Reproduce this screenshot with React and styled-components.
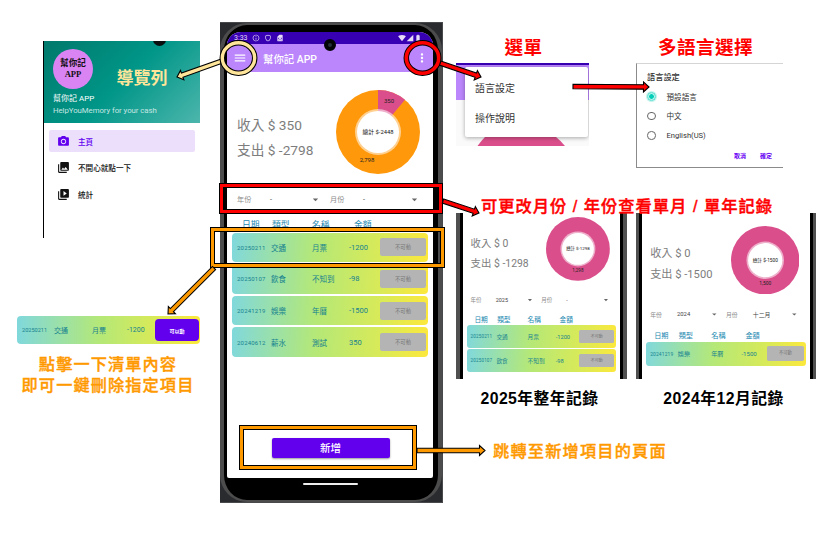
import React from "react";
import styled, { createGlobalStyle, ThemeProvider, css } from "styled-components";
import {
  MdCameraAlt,
  MdPhotoLibrary,
  MdVideoLibrary,
  MdMenu,
  MdMoreVert,
  MdArrowDropDown,
  MdInfoOutline,
  MdOutlineShield,
  MdSimCard,
  MdSignalWifi4Bar,
  MdSignalCellular4Bar,
  MdBatteryFull,
} from "react-icons/md";

const Global = createGlobalStyle`
  * { box-sizing: border-box; }
  body { margin: 0; background: #fff; }
`;

/* Lengths inside a ledger screen follow the theme's scale factor. */
const u = (n) => (p) => `${n * p.theme.k}px`;
const appFont = `Roboto, "Noto Sans CJK TC", sans-serif`;
const noteFont = `"Liberation Sans", "Noto Sans CJK TC", sans-serif`;

const Page = styled.main`
  position: relative;
  display: flex;
  width: 840px;
  height: 540px;
  overflow: hidden;
  font-family: ${appFont};
  white-space: nowrap;
`;

/* ---------- left column ---------- */
const LeftColumn = styled.section`
  width: 220px;
  flex: none;
  padding-top: 41px;
`;
const Drawer = styled.nav`
  width: 157px;
  height: 197px;
  margin-left: 43px;
  border-left: 1px solid #000;
`;
const DrawerHeader = styled.header`
  position: relative;
  height: 82px;
  padding: 7px 0 0 9px;
  overflow: hidden;
  background: linear-gradient(135deg, #00796b 0%, #009688 50%, #4db6ac 100%);
  color: #fff;
`;
const DrawerTop = styled.div`
  display: flex;
  align-items: center;
  height: 41px;
`;
const Avatar = styled.div`
  display: flex;
  flex-direction: column;
  align-items: center;
  justify-content: center;
  width: 40px;
  height: 40px;
  border-radius: 50%;
  background: #da83f3;
  color: #111;
  font: bold 8.6px/10.5px "Liberation Serif", "Noto Sans CJK TC", serif;
`;
const DrawerNote = styled.h2`
  margin: 20px 0 0 23.5px;
  font: bold 17px/20px ${noteFont};
  color: #ffe599;
`;
const DrawerTitle = styled.div`
  margin-top: 4px;
  font-size: 8px;
  line-height: 12px;
`;
const DrawerSubtitle = styled.div`
  font-size: 7.8px;
  line-height: 11px;
  letter-spacing: -0.05px;
  color: #c5e6e2;
`;
const DrawerCamera = styled.i`
  position: absolute;
  left: 109px;
  top: -8px;
  width: 13px;
  height: 13px;
  border-radius: 50%;
  background: #0a0f10;
`;
const NavList = styled.div`
  display: flex;
  flex-direction: column;
  gap: 4.7px;
  padding: 7px 5px 0;
`;
const NavItem = styled.a`
  display: flex;
  align-items: center;
  gap: 8px;
  height: 22px;
  padding-left: 8px;
  border-radius: 2px;
  font-size: 7.6px;
  font-weight: 500;
  color: ${(p) => (p.$active ? "#6200ee" : "#111")};
  background: ${(p) => (p.$active ? "#ecdffc" : "transparent")};
  svg { width: 13px; height: 13px; }
`;
const SwipedRow = styled.div`
  display: grid;
  grid-template-columns: 32px 38px 35px 28px 44px;
  align-items: center;
  width: 183px;
  height: 28px;
  margin: 78px 0 0 17px;
  padding-left: 5px;
  border-radius: 4px;
  background: linear-gradient(90deg, #80d8dc, #b4e878 45%, #d8ea58 75%, #fce83c);
  color: #16828f;
  font-size: 7px;
`;
const SwipedDate = styled.span`
  font-size: 5.6px;
`;
const DeleteButton = styled.button`
  height: 22px;
  padding: 0;
  border: 0;
  border-radius: 4px;
  background: #6200ee;
  color: #fff;
  font: 600 5px ${appFont};
`;
const LeftNote = styled.p`
  width: 216px;
  margin: 10px 0 0;
  font: 500 16.2px/21px ${noteFont};
  letter-spacing: 1.1px;
  text-align: center;
  color: #ff9900;
  -webkit-text-stroke: 0.35px #ff9900;
`;

/* ---------- phone ---------- */
const PhoneFrame = styled.section`
  flex: none;
  width: 223px;
  height: 481px;
  margin-top: 22px;
  border: 1px solid #47494c;
  border-width: 1px 1px 1px 0;
  background: #292b2f;
`;
const PhoneBody = styled.div`
  position: relative;
  height: 479px;
  padding: 7px 5px 0 3px;
  border: solid #4c4c4c;
  border-width: 2px 4px;
  border-radius: 27px;
  background: #000;
`;
const PhoneScreen = styled.div`
  height: 446px;
  overflow: hidden;
  border-radius: 14px 14px 2px 2px;
  background: #fff;
`;
const StatusBar = styled.div`
  display: flex;
  align-items: center;
  gap: 4px;
  height: 12px;
  padding: 0 11px 0 7px;
  background: #3700b3;
  color: #e6dcf8;
  font-size: 7px;
  svg { width: 8px; height: 8px; }
`;
const StatusRight = styled.span`
  display: flex;
  margin-left: auto;
`;
const AppBar = styled.header`
  display: flex;
  align-items: center;
  height: 28px;
  padding: 0 4px 0 6px;
  background: #bb86fc;
  color: #fff;
  svg { width: 14px; height: 14px; }
`;
const AppTitle = styled.h1`
  flex: 1;
  margin: 0 0 0 16px;
  font: 500 10.4px ${appFont};
`;
const PhoneCamera = styled.i`
  position: absolute;
  left: 100px;
  top: 14px;
  width: 12px;
  height: 12px;
  border: 4px solid #030405;
  border-radius: 50%;
  background: #26303a;
`;
const PhoneContent = styled.div`
  padding-top: 18px;
`;
const Bottom = styled.div`
  display: flex;
  justify-content: center;
  padding: 81px 0 0 1px;
`;
const AddButton = styled.button`
  width: 118px;
  height: 20px;
  border: 0;
  border-radius: 2px;
  background: #6200ee;
  box-shadow: 0 1px 2px #0006;
  color: #fff;
  font: 500 10.5px/20px ${appFont};
`;
const HomeBar = styled.div`
  width: 55px;
  height: 2px;
  margin: 5px auto 0;
  border-radius: 1px;
  background: #eee;
`;

/* ---------- ledger contents ---------- */
const Summary = styled.div`
  display: flex;
  justify-content: space-between;
  height: ${u(100)};
  padding: 0 ${u(13)} 0 ${u(10)};
`;
const Totals = styled.div`
  padding-top: ${u(23)};
  font-size: ${u(13.7)};
  line-height: ${u(25.3)};
  color: #7d7d7d;
`;
const DonutSvg = styled.svg`
  width: ${u(84)};
  height: ${u(84)};
  font-family: ${appFont};
  text-anchor: middle;
`;
const Filters = styled.div`
  display: grid;
  grid-template-columns: ${u(33)} ${u(39)} ${u(21)} ${u(33)} ${u(45)} ${u(12)};
  align-items: center;
  height: ${u(18)};
  padding-left: ${u(10)};
  font-size: ${u(7.2)};
  color: #8b8b8b;
  svg { width: ${u(13)}; height: ${u(13)}; color: #666; }
`;
const FilterValue = styled.span`
  color: #444;
`;
const HeadRow = styled.div`
  display: grid;
  grid-template-columns: ${u(30)} ${u(40)} ${u(42)} ${u(40)};
  align-items: center;
  height: ${u(24.5)};
  padding: ${u(7.6)} 0 0 ${u(15)};
  font-size: ${u(8.8)};
  color: #1988b0;
`;
const Entries = styled.div`
  display: flex;
  flex-direction: column;
  gap: ${u(1.8)};
  padding: 0 ${u(5)};
`;
const Entry = styled.div`
  display: grid;
  grid-template-columns: ${u(34)} ${u(41)} ${u(37)} ${u(31)} ${u(46)};
  align-items: center;
  height: ${u(29.8)};
  padding-left: ${u(5)};
  border-radius: ${u(4)};
  background: linear-gradient(95deg, #80d8dc, #b4e878 42%, #d8ea58 75%, #fce83c);
  color: #16828f;
  font-size: ${u(7.5)};
`;
const EntryDate = styled.span`
  font-size: ${u(6)};
  letter-spacing: ${u(0.2)};
`;
const LockedButton = styled.span`
  height: ${u(18)};
  border-radius: ${u(2)};
  background: #b4b4b4;
  color: #777;
  font-size: ${u(5.3)};
  line-height: ${u(18)};
  text-align: center;
`;

/* ---------- right column ---------- */
const RightColumn = styled.section`
  flex: 1;
  padding: 31px 0 0 13px;
`;
const TopPanels = styled.div`
  display: flex;
  gap: 47px;
  height: 164px;
`;
const PanelNote = styled.h2`
  height: 32px;
  margin: 0;
  padding: 1px ${(p) => (p.$shift ? "8px" : "0")} 0 ${(p) => (p.$shift ? "0" : "2px")};
  font: bold 18.6px/32px ${noteFont};
  letter-spacing: 0.4px;
  text-align: center;
  color: #f00;
`;
const MenuShot = styled.div`
  width: 133px;
  height: 83px;
  padding: 4px 1px 0 9px;
  overflow: hidden;
  background: linear-gradient(#3700b3 0 2px, #bb86fc 2px 37px, #fafafa 37px);
`;
const Menu = styled.div`
  position: relative;
  height: 70px;
  padding: 7px 10px;
  border-radius: 2px;
  background: #fff;
  box-shadow: 0 1px 4px #0005;
  font-size: 10px;
  line-height: 30px;
  color: #333;
`;
const ChartPeek = styled.svg`
  display: block;
  width: 124px;
  height: 9px;
`;
const Dialog = styled.div`
  width: 147px;
  height: 105px;
  padding: 7px 10px 0;
  border: solid #8b8b8b;
  border-width: 1px 0 1px 1px;
  border-top-color: #d5d5d5;
  color: #333;
`;
const DialogTitle = styled.div`
  margin-bottom: 2.5px;
  font-size: 8.2px;
  line-height: 13px;
  font-weight: 500;
`;
const Option = styled.label`
  display: flex;
  align-items: center;
  gap: 11px;
  height: 19.6px;
  font-size: 7.6px;
`;
const Radio = styled.i`
  width: 8.5px;
  height: 8.5px;
  border: 1px solid #666;
  border-radius: 50%;
  ${(p) =>
    p.$on &&
    css`
      border-color: #4fdccb;
      background: radial-gradient(#03cdb7 0 2px, #b5f3ec 2.6px);
      box-shadow: 0 0 0 1px #c9f5ef;
    `}
`;
const DialogActions = styled.div`
  display: flex;
  justify-content: flex-end;
  gap: 14px;
  padding: 6px 1px 0 0;
  font-size: 6px;
  font-weight: 600;
  line-height: 10px;
  color: #6a00f4;
`;
const FilterNote = styled.h2`
  position: relative;
  z-index: 1;
  height: 18px;
  margin: 0 0 0 25px;
  font: 500 16.3px/22px ${noteFont};
  letter-spacing: 0.98px;
  color: #f00;
  -webkit-text-stroke: 0.4px #f00;
`;
const Shots = styled.div`
  display: flex;
  gap: 9px;
`;
const Shot = styled.figure`
  width: ${(p) => p.$w}px;
  margin: 0;
`;
const ShotScreen = styled.div`
  height: 166px;
  padding-top: ${(p) => p.$top}px;
  border: solid #000;
  border-width: 0 3px;
  background: #fff;
`;
const ShotFrame = styled.div`
  overflow: hidden;
  border: solid #505050;
  border-width: 0 ${(p) => p.$edge}px;
`;
const ShotCaption = styled.figcaption`
  margin-top: 8px;
  padding-right: ${(p) => p.$shift}px;
  font: bold 15.8px/23px ${noteFont};
  letter-spacing: 0.45px;
  text-align: center;
  color: #000;
`;

/* ---------- annotations ---------- */
const Marks = styled.svg`
  position: absolute;
  inset: 0;
  z-index: 2;
`;
const HighlightBox = styled.div`
  position: absolute;
  z-index: 2;
  left: ${(p) => p.$x}px;
  top: ${(p) => p.$y}px;
  width: ${(p) => p.$w}px;
  height: ${(p) => p.$h}px;
  border: 1px solid #000;
  box-shadow: inset 0 0 0 3px ${(p) => p.$c}, inset 0 0 0 4px #000;
`;
const AddNote = styled.p`
  margin: 30px 0 0 37px;
  font: 500 16.2px/22px ${noteFont};
  letter-spacing: 1.2px;
  color: #ff9900;
  -webkit-text-stroke: 0.35px #ff9900;
`;

function Arrow({ from, to, color, head = 5 }) {
  const dx = to[0] - from[0];
  const dy = to[1] - from[1];
  const len = Math.hypot(dx, dy);
  const neck = len - 5.5;
  const angle = (Math.atan2(dy, dx) * 180) / Math.PI;
  return (
    <polygon
      transform={`translate(${from[0]} ${from[1]}) rotate(${angle})`}
      points={`0,-2.2 ${neck},-2.2 ${neck},${-head} ${len},0 ${neck},${head} ${neck},2.2 0,2.2`}
      fill={color}
      stroke="#000"
      strokeWidth="1.1"
    />
  );
}

function Donut({ color, total, value, slice }) {
  return (
    <DonutSvg viewBox="0 0 84 84">
      <circle cx="42" cy="42" r="42" fill={color} />
      {slice && <path d="M42 42V0A42 42 0 0 1 69 9.8Z" fill="#da4f8b" />}
      <circle cx="42" cy="42" r="23" fill="#fff" opacity=".55" />
      <circle cx="42" cy="42" r="21" fill="#fff" />
      {slice && <text x="53" y="13" fontSize="6" fill="#222">{slice}</text>}
      <text x="42" y="44" fontSize="5.8" fill="#111">{total}</text>
      <text x={slice ? 31 : 42} y="72" fontSize="6" fill="#222">{value}</text>
    </DonutSvg>
  );
}

function Ledger({ k, income, expense, chart, year, month, entries }) {
  return (
    <ThemeProvider theme={{ k }}>
      <Summary>
        <Totals>
          <div>收入 $ {income}</div>
          <div>支出 $ {expense}</div>
        </Totals>
        <Donut {...chart} />
      </Summary>
      <Filters>
        <span>年份</span>
        <FilterValue>{year}</FilterValue>
        <MdArrowDropDown />
        <span>月份</span>
        <FilterValue>{month}</FilterValue>
        <MdArrowDropDown />
      </Filters>
      <HeadRow>
        <span>日期</span>
        <span>類型</span>
        <span>名稱</span>
        <span>金額</span>
      </HeadRow>
      <Entries>
        {entries.map(([date, type, name, amount]) => (
          <Entry key={date}>
            <EntryDate>{date}</EntryDate>
            <span>{type}</span>
            <span>{name}</span>
            <span>{amount}</span>
            <LockedButton>不可動</LockedButton>
          </Entry>
        ))}
      </Entries>
    </ThemeProvider>
  );
}

const entries = [
  ["20250211", "交通", "月票", "-1200"],
  ["20250107", "飲食", "不知到", "-98"],
  ["20241219", "娛樂", "年曆", "-1500"],
  ["20240612", "薪水", "測試", "350"],
];
const PINK = "#da4f8b";
const ORANGE = "#ff9900";
const SAND = "#ffe599";

export default function App() {
  return (
    <Page>
      <Global />
      <LeftColumn>
        <Drawer>
          <DrawerHeader>
            <DrawerCamera />
            <DrawerTop>
              <Avatar>
                <span>幫你記</span>
                <span>APP</span>
              </Avatar>
              <DrawerNote>導覽列</DrawerNote>
            </DrawerTop>
            <DrawerTitle>幫你記 APP</DrawerTitle>
            <DrawerSubtitle>HelpYouMemory for your cash</DrawerSubtitle>
          </DrawerHeader>
          <NavList>
            <NavItem $active><MdCameraAlt />主頁</NavItem>
            <NavItem><MdPhotoLibrary />不開心就點一下</NavItem>
            <NavItem><MdVideoLibrary />統計</NavItem>
          </NavList>
        </Drawer>
        <SwipedRow>
          <SwipedDate>20250211</SwipedDate>
          <span>交通</span>
          <span>月票</span>
          <span>-1200</span>
          <DeleteButton>可以動</DeleteButton>
        </SwipedRow>
        <LeftNote>點擊一下清單內容<br />即可一鍵刪除指定項目</LeftNote>
      </LeftColumn>

      <PhoneFrame>
        <PhoneBody>
          <PhoneScreen>
            <StatusBar>
              <span>3:33</span>
              <MdInfoOutline />
              <MdOutlineShield />
              <MdSimCard />
              <StatusRight>
                <MdSignalWifi4Bar />
                <MdSignalCellular4Bar />
                <MdBatteryFull />
              </StatusRight>
            </StatusBar>
            <AppBar>
              <MdMenu />
              <AppTitle>幫你記 APP</AppTitle>
              <MdMoreVert />
            </AppBar>
            <PhoneContent>
              <Ledger
                k={1}
                income="350"
                expense="-2798"
                chart={{ color: "#ff980a", total: "總計 $-2448", value: "2,798", slice: "350" }}
                year="-"
                month="-"
                entries={entries}
              />
            </PhoneContent>
            <Bottom>
              <AddButton>新增</AddButton>
            </Bottom>
          </PhoneScreen>
          <HomeBar />
          <PhoneCamera />
        </PhoneBody>
      </PhoneFrame>

      <RightColumn>
        <TopPanels>
          <div>
            <PanelNote>選單</PanelNote>
            <MenuShot>
              <Menu>
                <div>語言設定</div>
                <div>操作說明</div>
              </Menu>
              <ChartPeek viewBox="0 0 124 9">
                <path d="M12.5 9Q16 4 20 0H91Q96 4 100 9Z" fill={PINK} />
              </ChartPeek>
            </MenuShot>
          </div>
          <div>
            <PanelNote $shift>多語言選擇</PanelNote>
            <Dialog>
              <DialogTitle>語言設定</DialogTitle>
              <Option><Radio $on />預設語言</Option>
              <Option><Radio />中文</Option>
              <Option><Radio />English(US)</Option>
              <DialogActions><span>取消</span><span>確定</span></DialogActions>
            </Dialog>
          </div>
        </TopPanels>
        <FilterNote>可更改月份 / 年份查看單月 / 單年記錄</FilterNote>
        <Shots>
          <Shot $w={171}>
            <ShotFrame $edge={4}>
              <ShotScreen $top={4}>
                <Ledger
                  k={0.76}
                  income="0"
                  expense="-1298"
                  chart={{ color: PINK, total: "總計 $-1298", value: "1,298" }}
                  year="2025"
                  month="-"
                  entries={entries.slice(0, 2)}
                />
              </ShotScreen>
            </ShotFrame>
            <ShotCaption $shift={4}>2025年整年記錄</ShotCaption>
          </Shot>
          <Shot $w={180}>
            <ShotFrame $edge={3}>
              <ShotScreen $top={12.5}>
                <Ledger
                  k={0.815}
                  income="0"
                  expense="-1500"
                  chart={{ color: PINK, total: "總計 $-1500", value: "1,500" }}
                  year="2024"
                  month="十二月"
                  entries={entries.slice(2, 3)}
                />
              </ShotScreen>
            </ShotFrame>
            <ShotCaption $shift={5}>2024年12月記錄</ShotCaption>
          </Shot>
        </Shots>
        <AddNote>跳轉至新增項目的頁面</AddNote>
      </RightColumn>

      <HighlightBox $x={219} $y={183} $w={224} $h={31} $c="#f00" />
      <HighlightBox $x={210} $y={227} $w={235} $h={41} $c={ORANGE} />
      <HighlightBox $x={239} $y={425} $w={178} $h={45} $c={ORANGE} />
      <Marks width="840" height="540" fill="none">
        <Arrow from={[222, 61]} to={[177, 77]} color={SAND} />
        <Arrow from={[440, 63]} to={[481, 77]} color="#f00" />
        <Arrow from={[573, 86.5]} to={[649, 87]} color="#f00" />
        <Arrow from={[443, 201]} to={[479, 213]} color="#f00" />
        <Arrow from={[214, 268]} to={[168, 314]} color={ORANGE} />
        <Arrow from={[417, 450.5]} to={[485, 450.5]} color={ORANGE} />
        <ellipse cx="238.5" cy="58" rx="16.2" ry="15.2" stroke="#000" strokeWidth="5.5" />
        <ellipse cx="238.5" cy="58" rx="16.2" ry="15.2" stroke={SAND} strokeWidth="3.4" />
        <ellipse cx="422.5" cy="58" rx="16.2" ry="15.2" stroke="#000" strokeWidth="5.5" />
        <ellipse cx="422.5" cy="58" rx="16.2" ry="15.2" stroke="#f00" strokeWidth="3.6" />
      </Marks>
    </Page>
  );
}
